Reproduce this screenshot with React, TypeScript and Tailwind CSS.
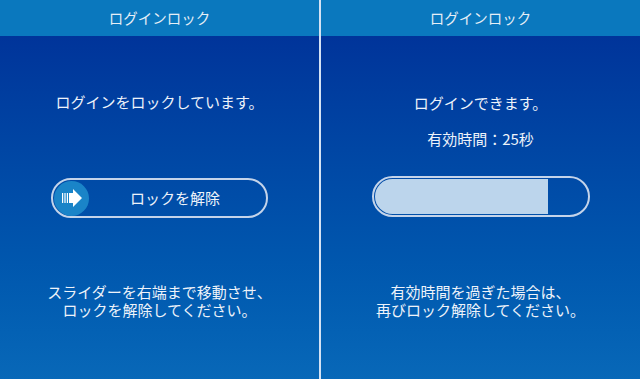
import React from 'react';

const font = { fontFamily: '"Noto Sans CJK JP", "Noto Sans", sans-serif' };

function Header() {
  return (
    <div className="h-9 bg-[#0a78be] flex items-center justify-center text-[14.5px] text-[#e6eef6]">
      ログインロック
    </div>
  );
}

function ArrowKnob() {
  return (
    <div className="w-[35px] h-[35px] rounded-full bg-[#1a84c8] flex items-center justify-center">
      <svg width="22" height="20" viewBox="0 0 22 20">
        <rect x="1" y="5" width="1.2" height="10" fill="#ffffff" />
        <rect x="3.4" y="5" width="1.2" height="10" fill="#ffffff" />
        <rect x="5.8" y="5" width="1.2" height="10" fill="#ffffff" />
        <path d="M8 5 H12 V1 L21 10 L12 19 V15 H8 Z" fill="#ffffff" />
      </svg>
    </div>
  );
}

function LockedPanel() {
  return (
    <div className="w-[319px] flex flex-col">
      <Header />
      <div className="flex-1 flex flex-col items-center bg-gradient-to-b from-[#00349a] to-[#0868b8] text-[#eef3fa]">
        <p className="mt-[57px] text-[15px] leading-[18px]">ログインをロックしています。</p>
        <div className="mt-[67px] w-[217px] h-10 rounded-full border-2 border-[#c4d4ea] flex items-center px-[1px]">
          <ArrowKnob />
          <span className="flex-1 text-center text-[15px] pr-1">ロックを解除</span>
        </div>
        <p className="mt-[65px] text-[15px] leading-[18px] text-center">
          スライダーを右端まで移動させ、
          <br />
          ロックを解除してください。
        </p>
      </div>
    </div>
  );
}

function UnlockedPanel() {
  const remaining = 0.82;
  return (
    <div className="flex-1 flex flex-col">
      <Header />
      <div className="flex-1 flex flex-col items-center bg-gradient-to-b from-[#00349a] to-[#0868b8] text-[#eef3fa]">
        <p className="mt-[58px] text-[15px] leading-[18px]">ログインできます。</p>
        <p className="mt-[18px] text-[15px] leading-[18px]">有効時間：25秒</p>
        <div className="mt-[28px] w-[218px] h-[41px] rounded-full border-2 border-[#c4d4ea] p-[1px] overflow-hidden">
          <div
            className="h-full bg-[#bcd5ec] rounded-l-full"
            style={{ width: `${remaining * 100}%` }}
          />
        </div>
        <p className="mt-[66px] text-[15px] leading-[18px] text-center">
          有効時間を過ぎた場合は、
          <br />
          再びロック解除してください。
        </p>
      </div>
    </div>
  );
}

export default function App() {
  return (
    <div className="w-[640px] h-[379px] flex bg-[#0868b8] overflow-hidden" style={font}>
      <LockedPanel />
      <div className="w-[2px] bg-[#d4e2f4]" />
      <UnlockedPanel />
    </div>
  );
}
